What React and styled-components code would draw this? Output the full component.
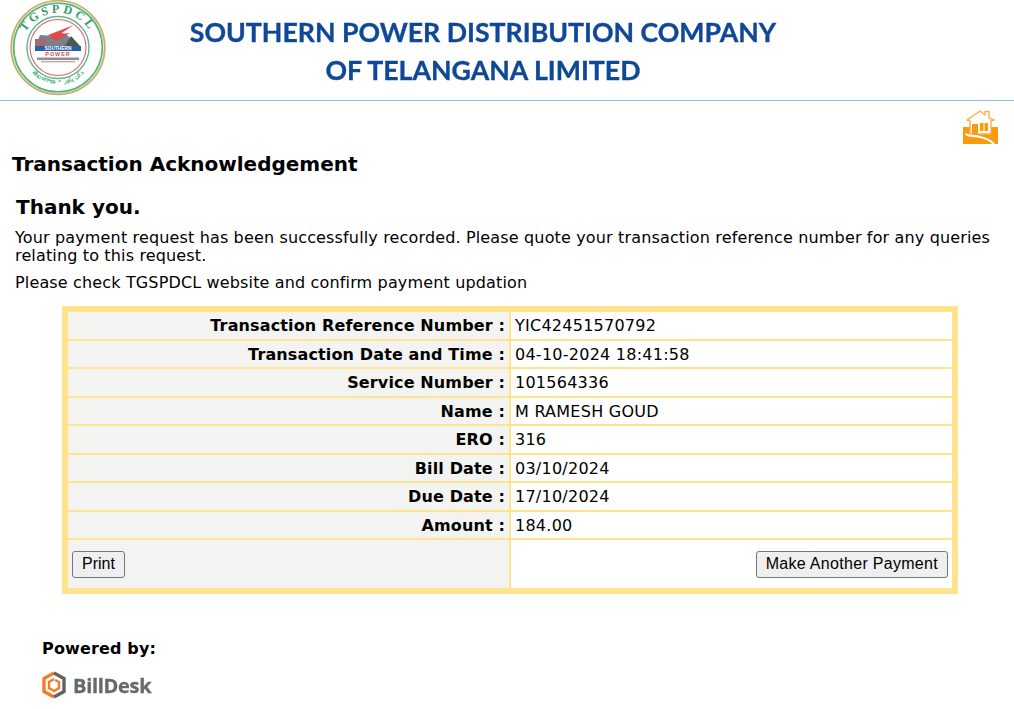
import React from "react";
import styled, { createGlobalStyle } from "styled-components";

const Global = createGlobalStyle`
  html, body { margin: 0; padding: 0; background: #fff; color: #000; }
  body { font-family: "DejaVu Sans", Verdana, sans-serif; }
`;
const Page = styled.div`width: 1014px; height: 709px; overflow: hidden;`;
const Header = styled.header`
  height: 100px; border-bottom: 1px solid #8ec5ea; display: flex; box-sizing: content-box;
`;
const SealBox = styled.div`width: 180px; padding: 0 0 0 10px; box-sizing: border-box; flex: none;`;
const Company = styled.div`
  width: 606px; padding-top: 13px; text-align: center; flex: none; white-space: nowrap;
  font-family: Lato, "Open Sans", sans-serif; font-weight: 700; font-size: 26.7px; line-height: 38px;
  color: #0f4897; -webkit-text-stroke: 0.35px #0f4897; filter: blur(0.4px);
`;
const HomeRow = styled.div`display: flex; justify-content: flex-end; padding: 9px 15px 0 0; height: 36px;`;
const Title = styled.h1`margin: 6px 0 0 12px; font-size: 20px; line-height: 24px; font-weight: 700;`;
const Content = styled.div`padding: 0 22px 0 15px;`;
const Thanks = styled.h2`margin: 19px 0 0 1px; font-size: 20px; line-height: 24px; font-weight: 700;`;
const Message = styled.p`margin: ${(p) => p.$top}px 0 0 0; font-size: 16px; line-height: 18px; letter-spacing: 0.15px;`;
const TableWrap = styled.div`
  margin: 14px 0 0 62px; width: 896px; box-sizing: border-box; border: 6px solid #ffe48d; background: #ffe48d;
  display: grid; grid-template-columns: 441px 441px; column-gap: 2px; row-gap: 2px;
  grid-template-rows: repeat(8, 26.5px) 48px;
`;
const Label = styled.div`
  background: #f3f3f2; display: flex; align-items: center; justify-content: flex-end;
  padding: 1px 4px 0 0; font-size: 16px; font-weight: 700; letter-spacing: 0.13px;
`;
const Value = styled.div`
  background: #fff; display: flex; align-items: center; padding: 1px 0 0 4px; font-size: 16px; letter-spacing: 0.25px;
`;
const ActionLeft = styled.div`background: #f3f3f2; display: flex; align-items: center; padding-left: 4px;`;
const ActionRight = styled.div`background: #fff; display: flex; align-items: center; justify-content: flex-end; padding-right: 4px;`;
const Button = styled.button`
  height: 27px; padding: 0 9px; box-sizing: border-box; font-family: "Liberation Sans", Arial, sans-serif;
  font-size: 16px; letter-spacing: ${(p) => p.$track || 0}px; color: #000; background: #efefef; border: 1px solid #767676; border-radius: 3px;
`;
const Powered = styled.div`margin: 45px 0 0 42px; font-size: 16px; line-height: 20px; font-weight: 700; letter-spacing: 0.15px;`;
const DeskRow = styled.div`margin: 12px 0 0 42px; display: flex; align-items: center; gap: 7px; height: 28px;`;
const DeskName = styled.span`
  font-family: "Open Sans", "Liberation Sans", sans-serif; font-weight: 700; font-size: 20px; letter-spacing: -0.3px; color: #666a6e;
  -webkit-text-stroke: 0.3px #666a6e; filter: blur(0.3px);
`;

const Seal = () => (
  <svg width="96" height="96" viewBox="0 0 96 96" style={{ display: "block" }}>
    <defs>
      <path id="topArc" d="M 11 50 A 37 37 0 0 1 85 50" />
      <path id="botArc" d="M 12 53 A 36.5 36.5 0 0 0 84 53" />
    </defs>
    <circle cx="48" cy="47.5" r="46.8" fill="#f4f0d8" stroke="#c8ae72" strokeWidth="1.8" />
    <circle cx="48" cy="47.5" r="44.3" fill="#fff" stroke="#4fb67c" strokeWidth="1.6" />
    <circle cx="48" cy="47.5" r="31" fill="#fff" stroke="#5cbb88" strokeWidth="1.4" />
    <circle cx="48" cy="47.5" r="28" fill="#fff" stroke="#d8607a" strokeWidth="1.1" />
    <text fontFamily="Liberation Serif, serif" fontWeight="700" fontSize="12" fill="#379a64" letterSpacing="3.2">
      <textPath href="#topArc" startOffset="50%" textAnchor="middle">TGSPDCL</textPath>
    </text>
    <text fontFamily="Noto Sans, sans-serif" fontWeight="700" fontSize="6.4" fill="#58b184" letterSpacing="0.7">
      <textPath href="#botArc" startOffset="50%" textAnchor="middle">తెలంగాణ • دکن پاور</textPath>
    </text>
    <path d="M25 47 L30 35 L45 36 L50 32 L57 35 L70 47Z" fill="#7d8088" />
    <path d="M38 35 L64 25 L50 34 L60 33 L46 41Z" fill="#df4b47" />
    <path d="M25 39 h11 v8 h-11Z" fill="#9f6b6e" />
    <path d="M54 47 L61 36 L71 47Z" fill="#4c5a4d" />
    <rect x="25" y="46" width="46" height="5" fill="#2c5ea8" />
    <text x="48" y="50.3" textAnchor="middle" fontFamily="Liberation Sans, sans-serif" fontWeight="700" fontSize="4.8" fill="#fff">SOUTHERN</text>
    <text x="48" y="56.4" textAnchor="middle" fontFamily="Liberation Sans, sans-serif" fontWeight="700" fontSize="5.4" letterSpacing="1" fill="#d94a55">POWER</text>
    <rect x="27" y="57.5" width="42" height="2.6" fill="#8f8f96" />
    <rect x="31" y="61" width="34" height="1.4" fill="#c6a9ae" />
  </svg>
);

const HomeIcon = () => (
  <svg width="36" height="36" viewBox="0 0 36 36" style={{ display: "block" }}>
    <rect x="0" y="17" width="35" height="17" fill="#fd9a0c" />
    <path d="M17 1 L22 5 V1.5 H26 V8 L31 10 L28 11 V24 H7 V11 L4 10Z" fill="#fff" stroke="#fdb04a" strokeWidth="1.4" strokeLinejoin="round" />
    <rect x="17" y="13" width="8" height="8" fill="#fd9a0c" />
    <rect x="20.5" y="13" width="1" height="8" fill="#fff" />
    <rect x="9" y="14" width="6" height="11" fill="#fd9a0c" />
    <path d="M3 23.5 C3 26 10 25.5 17 27 C24 28.5 28 31 31 34" fill="none" stroke="#fff" strokeWidth="2.2" />
  </svg>
);

const DeskIcon = () => (
  <svg width="24" height="28" viewBox="0 0 24 28" style={{ display: "block" }}>
    <path d="M12 2 L2 7.5 V20.5 L12 26" fill="none" stroke="#f47b2a" strokeWidth="3.4" />
    <path d="M12 2 L22 7.5 V20.5 L12 26" fill="none" stroke="#5f6367" strokeWidth="3.4" />
    <path d="M12 8 L7 11 V17 L12 20 L17 17 V11 L13 9" fill="none" stroke="#f47b2a" strokeWidth="2.4" />
  </svg>
);

const rows = [
  ["Transaction Reference Number :", "YIC42451570792"],
  ["Transaction Date and Time :", "04-10-2024 18:41:58"],
  ["Service Number :", "101564336"],
  ["Name :", "M RAMESH GOUD"],
  ["ERO :", "316"],
  ["Bill Date :", "03/10/2024"],
  ["Due Date :", "17/10/2024"],
  ["Amount :", "184.00"],
];

export default function App() {
  return (
    <Page>
      <Global />
      <Header>
        <SealBox><Seal /></SealBox>
        <Company>SOUTHERN POWER DISTRIBUTION COMPANY<br />OF TELANGANA LIMITED</Company>
      </Header>
      <HomeRow><HomeIcon /></HomeRow>
      <Title>Transaction Acknowledgement</Title>
      <Content>
        <Thanks>Thank you.</Thanks>
        <Message $top={10}>Your payment request has been successfully recorded. Please quote your transaction reference number for any queries relating to this request.</Message>
        <Message $top={9}>Please check TGSPDCL website and confirm payment updation</Message>
      </Content>
      <TableWrap>
        {rows.map(([k, v]) => (
          <React.Fragment key={k}>
            <Label>{k}</Label>
            <Value>{v}</Value>
          </React.Fragment>
        ))}
        <ActionLeft><Button>Print</Button></ActionLeft>
        <ActionRight><Button $track={0.3}>Make Another Payment</Button></ActionRight>
      </TableWrap>
      <Powered>Powered by:</Powered>
      <DeskRow><DeskIcon /><DeskName>BillDesk</DeskName></DeskRow>
    </Page>
  );
}
